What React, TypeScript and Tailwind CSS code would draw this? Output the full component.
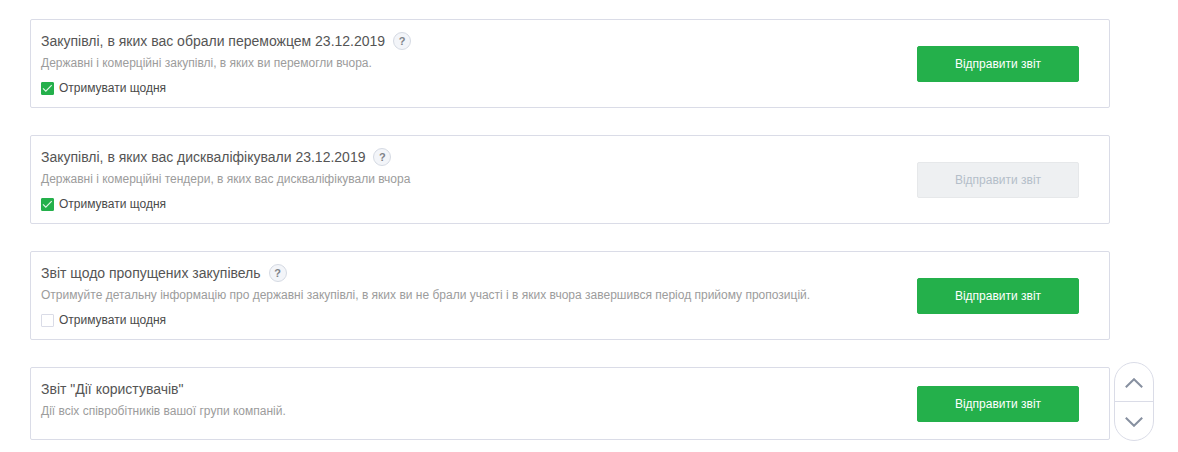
import React, { useState } from 'react';

type Report = {
  id: string;
  title: string;
  description: string;
  hint?: boolean;
  daily?: boolean;
  disabled?: boolean;
};

const reports: Report[] = [
  {
    id: 'won',
    title: 'Закупівлі, в яких вас обрали переможцем 23.12.2019',
    description: 'Державні і комерційні закупівлі, в яких ви перемогли вчора.',
    hint: true,
    daily: true,
  },
  {
    id: 'disqualified',
    title: 'Закупівлі, в яких вас дискваліфікували 23.12.2019',
    description: 'Державні і комерційні тендери, в яких вас дискваліфікували вчора',
    hint: true,
    daily: true,
    disabled: true,
  },
  {
    id: 'missed',
    title: 'Звіт щодо пропущених закупівель',
    description:
      'Отримуйте детальну інформацію про державні закупівлі, в яких ви не брали участі і в яких вчора завершився період прийому пропозицій.',
    hint: true,
    daily: false,
  },
  {
    id: 'actions',
    title: 'Звіт "Дії користувачів"',
    description: 'Дії всіх співробітників вашої групи компаній.',
  },
];

const ReportCard: React.FC<{ report: Report }> = ({ report }) => {
  const [daily, setDaily] = useState(!!report.daily);

  return (
    <section className="flex items-center justify-between gap-6 min-h-[73px] rounded-xs border border-[#dadce7] bg-white pl-[10px] pr-[30px]">
      <div className="self-start pt-[11px] pb-[9px]">
        <div className="flex items-center gap-2">
          <h2 className="text-[14px] leading-5 text-[#555555]">{report.title}</h2>
          {report.hint && (
            <button
              type="button"
              className="flex size-[18px] items-center justify-center rounded-full border border-[#d5dae3] bg-[#f3f5f9] text-[11px] leading-none font-bold text-[#7f8388]"
            >
              ?
            </button>
          )}
        </div>
        <p className="mt-0.5 text-[12px] leading-5 text-[#9c9c9c]">{report.description}</p>
        {report.daily !== undefined && (
          <div className="mt-[5px] flex h-5 items-center">
            <span className="grid size-[13px] place-items-center">
              <input
                id={report.id}
                type="checkbox"
                checked={daily}
                onChange={(e) => setDaily(e.target.checked)}
                className="col-start-1 row-start-1 size-[13px] appearance-none rounded-[1px] border border-[#dadce7] bg-white checked:border-[#24b04b] checked:bg-[#24b04b]"
              />
              {daily && (
                <svg viewBox="0 0 13 13" className="pointer-events-none col-start-1 row-start-1 size-[13px]" fill="none" stroke="#e3f6e8">
                  <path d="M2 6.4 4.8 9.2 10.7 3.2" strokeWidth="1.2" />
                </svg>
              )}
            </span>
            <label htmlFor={report.id} className="pl-[5px] text-[12px] leading-5 text-[#4a4a4a]">
              Отримувати щодня
            </label>
          </div>
        )}
      </div>
      <button
        type="button"
        disabled={report.disabled}
        className="h-9 w-[162px] shrink-0 rounded-xs border border-[#24b04b] bg-[#24b04b] text-[12px] text-white disabled:border-[#e6e8ea] disabled:bg-[#eef0f2] disabled:text-[#b4bec9]"
      >
        Відправити звіт
      </button>
    </section>
  );
};

const App: React.FC = () => {
  return (
    <main className="bg-white pt-[19px] pr-[68px] pb-[11px] pl-[30px] font-['Liberation_Sans',Arial,sans-serif]">
      <div className="flex flex-col gap-[27px]">
        {reports.map((report) => (
          <ReportCard key={report.id} report={report} />
        ))}
      </div>

      <div className="fixed right-[24px] bottom-[11px] flex w-10 flex-col divide-y divide-[#dadce7] overflow-hidden rounded-full border border-[#dadce7] bg-white text-[#8790a0]">
        <button type="button" aria-label="Вгору" className="flex h-[39px] items-center justify-center pt-0.5">
          <svg viewBox="0 0 18 10" className="h-[10px] w-[18px]" fill="none" stroke="currentColor" strokeWidth="2">
            <path d="M0.8 9.3 9 1.2 17.2 9.3" />
          </svg>
        </button>
        <button type="button" aria-label="Вниз" className="flex h-[38px] items-center justify-center pt-0.5">
          <svg viewBox="0 0 18 10" className="h-[10px] w-[18px]" fill="none" stroke="currentColor" strokeWidth="2">
            <path d="M0.8 0.7 9 8.8 17.2 0.7" />
          </svg>
        </button>
      </div>
    </main>
  );
};

export default App;
